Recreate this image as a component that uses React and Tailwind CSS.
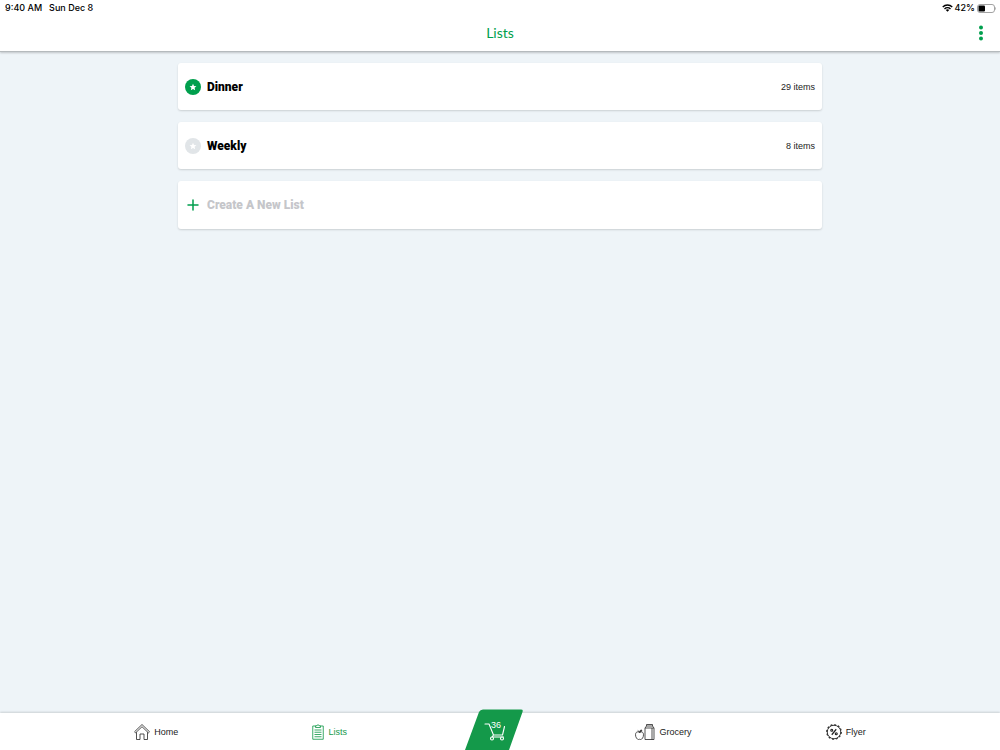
import React from "react";

const lists = [
  { id: "dinner", name: "Dinner", count: "29 items", favorite: true },
  { id: "weekly", name: "Weekly", count: "8 items", favorite: false },
];

function StatusBar() {
  return (
    <div className="flex h-4 items-center justify-between pl-[5px] pr-1 font-['Inter',sans-serif] text-[9px] font-medium leading-4 text-black">
      <div className="flex gap-[7px]">
        <span>9:40 AM</span>
        <span>Sun Dec 8</span>
      </div>
      <div className="flex items-center gap-[2px]">
        <svg className="h-2 w-[11px]" viewBox="0 0 22 16" fill="none" stroke="black" strokeWidth="2.8" aria-hidden="true">
          <path d="M1.5 6a13.5 13.5 0 0 1 19 0" />
          <path d="M5 9.8a8.5 8.5 0 0 1 12 0" />
          <path d="M11 15.6 7.6 12.1a4.8 4.8 0 0 1 6.8 0Z" fill="black" stroke="none" />
        </svg>
        <span>42%</span>
        <svg className="h-[9px] w-[19px]" viewBox="0 0 38 18" aria-hidden="true">
          <rect x="1" y="1" width="34" height="16" rx="5" fill="white" stroke="#a3a3a3" strokeWidth="2" />
          <rect x="3" y="3" width="13" height="12" rx="2" fill="black" />
          <path d="M36.500 6c2 1 2 5 0 6Z" fill="#a3a3a3" />
        </svg>
      </div>
    </div>
  );
}

function StarBadge({ active }) {
  return (
    <svg className="h-4 w-4 shrink-0" viewBox="0 0 32 32" aria-hidden="true">
      <circle cx="16" cy="16" r="16" fill={active ? "#009f4d" : "#e1e5e8"} />
      <path d="m16 9.5 2 4.5 4.9.4-3.7 3.2 1.1 4.8-4.3-2.6-4.3 2.6 1.1-4.8-3.7-3.2 4.9-.4Z" fill="white" />
    </svg>
  );
}

function HomeIcon() {
  return (
    <svg className="h-4 w-4" viewBox="0 0 32 32" fill="none" stroke="#333" strokeWidth="1.7" strokeLinejoin="round" aria-hidden="true">
      <path d="M16 1 1 15.5l2.2 2.2L16 5.4l12.8 12.3 2.2-2.2Z" />
      <path d="M5 16.5V31h7V20h8v11h7V16.5" />
    </svg>
  );
}

function ClipboardIcon() {
  return (
    <svg className="h-4 w-3" viewBox="0 0 24 32" fill="none" stroke="#169b4c" strokeWidth="1.7" aria-hidden="true">
      <path d="M7 4H1.5v26.5h21V4H17" />
      <path d="M7 7V3.5h3a2 2 0 0 1 4 0h3V7Z" />
      <path d="M5 12h14M5 16.5h14M5 21h14M5 25.5h14" />
    </svg>
  );
}

function GroceryIcon() {
  return (
    <svg className="h-4 w-5" viewBox="0 0 40 32" fill="none" stroke="#333" strokeWidth="1.7" strokeLinejoin="round" aria-hidden="true">
      <path d="M9 17c-4-3-8-.5-8 4.5C1 27 4.5 31 7 31c1 0 1.300-.5 2-.5s1 .5 2 .5c3 0 6-4 6-9.500 0-5-4-7.500-8-4.500Z" />
      <path d="M9 17c-.5-2-2-3-3.500-4" />
      <path d="M9 16.500c0-3 2-4.500 4.500-4.500 0 2.500-2 4.500-4.500 4.500Z" fill="#333" />
      <path d="M20 8h18v23H20ZM20 8l3-4h12l3 4M23 4V1h12v3M34 8v23" />
    </svg>
  );
}

function FlyerIcon() {
  return (
    <svg className="h-4 w-4" viewBox="0 0 32 32" fill="none" stroke="#222" strokeLinejoin="round" aria-hidden="true">
      <circle cx="16" cy="16" r="13.500" strokeWidth="1.800" />
      <circle cx="16" cy="16" r="14.600" strokeWidth="2.200" strokeDasharray="3.820 3.820" />
      <path d="m20.500 10.500-9 11" strokeWidth="2.400" />
      <circle cx="11.500" cy="12.500" r="2" strokeWidth="2.200" />
      <circle cx="20.500" cy="19.500" r="2" strokeWidth="2.200" />
    </svg>
  );
}

function NavLink({ icon, label, active }) {
  return (
    <a
      href={`#${label.toLowerCase()}`}
      aria-current={active ? "page" : undefined}
      className={`flex items-center gap-1 ${active ? "text-[#169b4c]" : "text-[#222]"}`}
    >
      {icon}
      <span>{label}</span>
    </a>
  );
}

export default function App() {
  return (
    <div className="flex min-h-screen flex-col bg-[#eef4f8] font-['Lato',sans-serif]">
      <header className="relative border-b border-[#b5babd] bg-white shadow-[0_1px_2px_rgba(0,0,0,0.2)]">
        <StatusBar />
        <div className="grid grid-cols-[1fr_auto_1fr] items-center px-4 pb-2 pt-[7px]">
          <h1 className="col-start-2 text-sm leading-5 text-[#009f4d]">Lists</h1>
          <button type="button" aria-label="More options" className="justify-self-end">
            <svg className="h-4 w-[6px]" viewBox="0 0 6 16" fill="#009f4d" aria-hidden="true">
              <circle cx="3" cy="2.500" r="2" />
              <circle cx="3" cy="8" r="2" />
              <circle cx="3" cy="13.500" r="2" />
            </svg>
          </button>
        </div>
      </header>

      <main className="mx-auto flex w-[64.4%] flex-1 flex-col gap-3 pt-[11px]">
        {lists.map((list) => (
          <a
            key={list.id}
            href={`#${list.id}`}
            className="flex h-[47px] items-center gap-[6px] rounded-[3px] bg-white px-[7px] shadow-[0_1px_2px_rgba(0,0,0,0.15)]"
          >
            <StarBadge active={list.favorite} />
            <span className="flex-1 font-['Roboto',sans-serif] text-xs leading-4 font-black text-black">{list.name}</span>
            <span className="font-['Liberation_Sans',sans-serif] text-[9px] leading-4 text-[#222]">{list.count}</span>
          </a>
        ))}
        <button
          type="button"
          className="flex h-12 items-center gap-[6px] rounded-[3px] bg-white px-[7px] text-left shadow-[0_1px_2px_rgba(0,0,0,0.15)]"
        >
          <svg className="h-4 w-4 shrink-0" viewBox="0 0 16 16" stroke="#009f4d" strokeWidth="1.500" strokeLinecap="round" aria-hidden="true">
            <path d="M8 3v10M3 8h10" />
          </svg>
          <span className="font-['Roboto',sans-serif] text-xs leading-4 font-black text-[#c5c6ca]">Create A New List</span>
        </button>
      </main>

      <nav aria-label="Main" className="flex h-[37px] items-center justify-evenly bg-white font-['Liberation_Sans',sans-serif] text-[9px] leading-4 shadow-[0_-1px_2px_rgba(0,0,0,0.15)]">
        <NavLink icon={<HomeIcon />} label="Home" />
        <NavLink icon={<ClipboardIcon />} label="Lists" active />
        <a href="#cart" aria-label="Cart, 36 items" className="relative h-full w-5">
          <svg className="absolute -left-4 bottom-0 h-[41px] w-[58px]" viewBox="0 0 58 41" fill="none" aria-hidden="true">
            <path d="M0 41 14 3Q15.200.500 18 .500H56Q58.500.500 57.500 3L44 41Z" fill="#14994a" />
            <g stroke="white" strokeWidth="1.100" strokeLinejoin="round" strokeLinecap="round">
              <path d="M20 15h4l4.500 11h9l2-8.500M28.500 26l-1.500 2h11.500" />
              <circle cx="27" cy="29.500" r="1.500" fill="#14994a" />
              <circle cx="37" cy="29.500" r="1.500" fill="#14994a" />
            </g>
            <text x="31" y="19" textAnchor="middle" fill="white" fontSize="9">36</text>
          </svg>
        </a>
        <NavLink icon={<GroceryIcon />} label="Grocery" />
        <NavLink icon={<FlyerIcon />} label="Flyer" />
      </nav>
    </div>
  );
}
